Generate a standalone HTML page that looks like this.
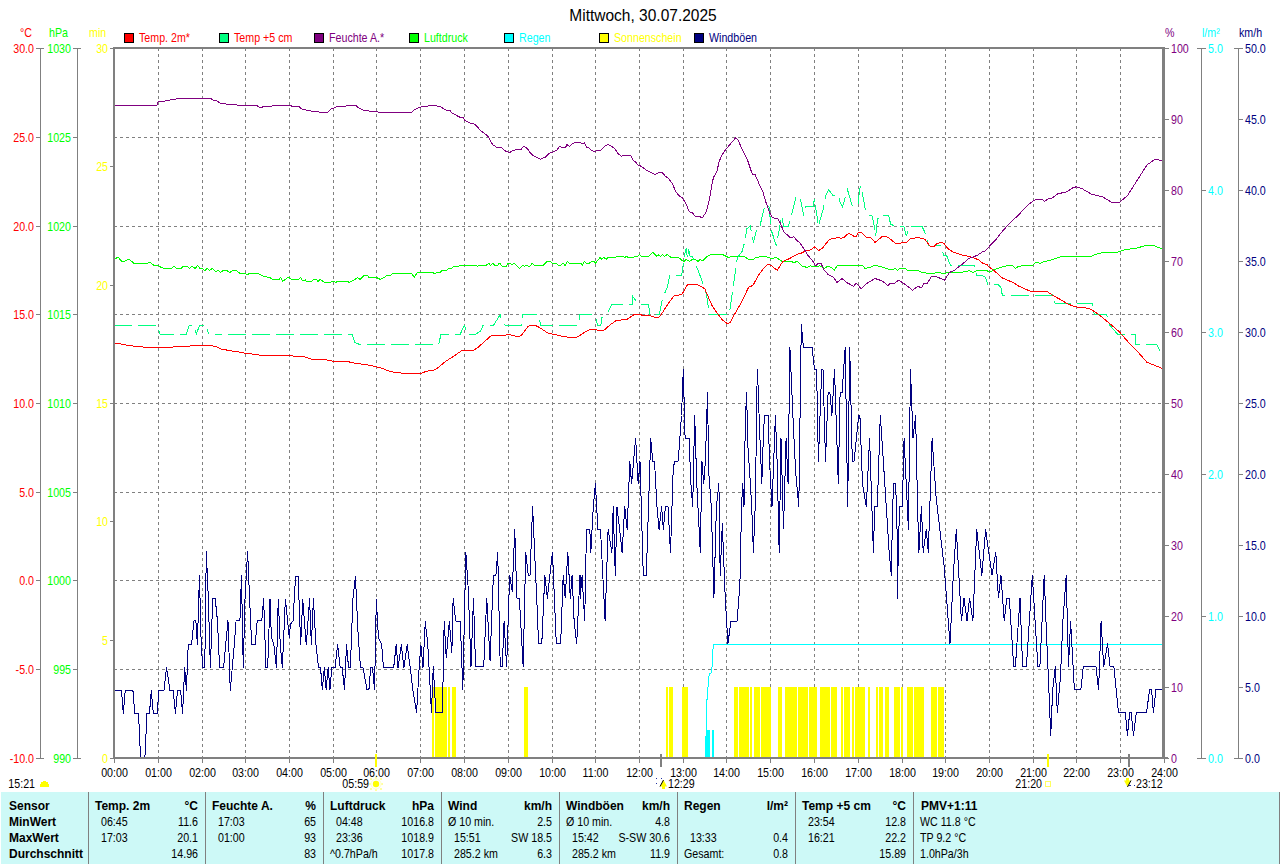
<!DOCTYPE html>
<html><head><meta charset="utf-8"><style>
html,body{margin:0;padding:0;background:#fff;width:1280px;height:864px;overflow:hidden}
svg{display:block;font-family:"Liberation Sans", sans-serif}
</style></head><body>
<svg width="1280" height="864" viewBox="0 0 1280 864">
<rect width="1280" height="864" fill="#fff"/>
<text transform="translate(643,21) scale(0.97,1)" fill="#000" text-anchor="middle" font-size="16" font-weight="normal" >Mittwoch, 30.07.2025</text>
<rect x="124.5" y="33.5" width="9" height="9" fill="#FF0000" stroke="#000" stroke-width="1"/>
<text transform="translate(139,42) scale(0.89,1)" fill="#FF0000" text-anchor="start" font-size="12" >Temp. 2m*</text>
<rect x="219.5" y="33.5" width="9" height="9" fill="#00FF80" stroke="#000" stroke-width="1"/>
<text transform="translate(234,42) scale(0.89,1)" fill="#FF0000" text-anchor="start" font-size="12" >Temp +5 cm</text>
<rect x="314.5" y="33.5" width="9" height="9" fill="#800080" stroke="#000" stroke-width="1"/>
<text transform="translate(329,42) scale(0.89,1)" fill="#800080" text-anchor="start" font-size="12" >Feuchte A.*</text>
<rect x="409.5" y="33.5" width="9" height="9" fill="#00FF00" stroke="#000" stroke-width="1"/>
<text transform="translate(424,42) scale(0.89,1)" fill="#00FF00" text-anchor="start" font-size="12" >Luftdruck</text>
<rect x="504.5" y="33.5" width="9" height="9" fill="#00FFFF" stroke="#000" stroke-width="1"/>
<text transform="translate(519,42) scale(0.89,1)" fill="#00FFFF" text-anchor="start" font-size="12" >Regen</text>
<rect x="599.5" y="33.5" width="9" height="9" fill="#FFFF00" stroke="#000" stroke-width="1"/>
<text transform="translate(614,42) scale(0.89,1)" fill="#FFFF00" text-anchor="start" font-size="12" >Sonnenschein</text>
<rect x="694.5" y="33.5" width="9" height="9" fill="#000080" stroke="#000" stroke-width="1"/>
<text transform="translate(709,42) scale(0.89,1)" fill="#000080" text-anchor="start" font-size="12" >Windböen</text>
<text transform="translate(20,37) scale(0.89,1)" fill="#FF0000" text-anchor="start" font-size="12" >°C</text>
<text transform="translate(49,37) scale(0.89,1)" fill="#00FF00" text-anchor="start" font-size="12" >hPa</text>
<text transform="translate(89,37) scale(0.89,1)" fill="#FFFF00" text-anchor="start" font-size="12" >min</text>
<text transform="translate(1165,37) scale(0.89,1)" fill="#800080" text-anchor="start" font-size="12" >%</text>
<text transform="translate(1202,37) scale(0.89,1)" fill="#00FFFF" text-anchor="start" font-size="12" >l/m²</text>
<text transform="translate(1239,37) scale(0.89,1)" fill="#000080" text-anchor="start" font-size="12" >km/h</text>
<line x1="158.5" y1="48" x2="158.5" y2="757" stroke="#808080" stroke-width="1" stroke-dasharray="3 3" shape-rendering="crispEdges"/>
<line x1="202.5" y1="48" x2="202.5" y2="757" stroke="#808080" stroke-width="1" stroke-dasharray="3 3" shape-rendering="crispEdges"/>
<line x1="245.5" y1="48" x2="245.5" y2="757" stroke="#808080" stroke-width="1" stroke-dasharray="3 3" shape-rendering="crispEdges"/>
<line x1="289.5" y1="48" x2="289.5" y2="757" stroke="#808080" stroke-width="1" stroke-dasharray="3 3" shape-rendering="crispEdges"/>
<line x1="333.5" y1="48" x2="333.5" y2="757" stroke="#808080" stroke-width="1" stroke-dasharray="3 3" shape-rendering="crispEdges"/>
<line x1="376.5" y1="48" x2="376.5" y2="757" stroke="#808080" stroke-width="1" stroke-dasharray="3 3" shape-rendering="crispEdges"/>
<line x1="420.5" y1="48" x2="420.5" y2="757" stroke="#808080" stroke-width="1" stroke-dasharray="3 3" shape-rendering="crispEdges"/>
<line x1="464.5" y1="48" x2="464.5" y2="757" stroke="#808080" stroke-width="1" stroke-dasharray="3 3" shape-rendering="crispEdges"/>
<line x1="508.5" y1="48" x2="508.5" y2="757" stroke="#808080" stroke-width="1" stroke-dasharray="3 3" shape-rendering="crispEdges"/>
<line x1="552.5" y1="48" x2="552.5" y2="757" stroke="#808080" stroke-width="1" stroke-dasharray="3 3" shape-rendering="crispEdges"/>
<line x1="595.5" y1="48" x2="595.5" y2="757" stroke="#808080" stroke-width="1" stroke-dasharray="3 3" shape-rendering="crispEdges"/>
<line x1="639.5" y1="48" x2="639.5" y2="757" stroke="#808080" stroke-width="1" stroke-dasharray="3 3" shape-rendering="crispEdges"/>
<line x1="683.5" y1="48" x2="683.5" y2="757" stroke="#808080" stroke-width="1" stroke-dasharray="3 3" shape-rendering="crispEdges"/>
<line x1="726.5" y1="48" x2="726.5" y2="757" stroke="#808080" stroke-width="1" stroke-dasharray="3 3" shape-rendering="crispEdges"/>
<line x1="770.5" y1="48" x2="770.5" y2="757" stroke="#808080" stroke-width="1" stroke-dasharray="3 3" shape-rendering="crispEdges"/>
<line x1="814.5" y1="48" x2="814.5" y2="757" stroke="#808080" stroke-width="1" stroke-dasharray="3 3" shape-rendering="crispEdges"/>
<line x1="858.5" y1="48" x2="858.5" y2="757" stroke="#808080" stroke-width="1" stroke-dasharray="3 3" shape-rendering="crispEdges"/>
<line x1="902.5" y1="48" x2="902.5" y2="757" stroke="#808080" stroke-width="1" stroke-dasharray="3 3" shape-rendering="crispEdges"/>
<line x1="945.5" y1="48" x2="945.5" y2="757" stroke="#808080" stroke-width="1" stroke-dasharray="3 3" shape-rendering="crispEdges"/>
<line x1="989.5" y1="48" x2="989.5" y2="757" stroke="#808080" stroke-width="1" stroke-dasharray="3 3" shape-rendering="crispEdges"/>
<line x1="1033.5" y1="48" x2="1033.5" y2="757" stroke="#808080" stroke-width="1" stroke-dasharray="3 3" shape-rendering="crispEdges"/>
<line x1="1076.5" y1="48" x2="1076.5" y2="757" stroke="#808080" stroke-width="1" stroke-dasharray="3 3" shape-rendering="crispEdges"/>
<line x1="1120.5" y1="48" x2="1120.5" y2="757" stroke="#808080" stroke-width="1" stroke-dasharray="3 3" shape-rendering="crispEdges"/>
<line x1="114" y1="137.5" x2="1162" y2="137.5" stroke="#808080" stroke-width="1" stroke-dasharray="3 3" shape-rendering="crispEdges"/>
<line x1="114" y1="226.5" x2="1162" y2="226.5" stroke="#808080" stroke-width="1" stroke-dasharray="3 3" shape-rendering="crispEdges"/>
<line x1="114" y1="314.5" x2="1162" y2="314.5" stroke="#808080" stroke-width="1" stroke-dasharray="3 3" shape-rendering="crispEdges"/>
<line x1="114" y1="403.5" x2="1162" y2="403.5" stroke="#808080" stroke-width="1" stroke-dasharray="3 3" shape-rendering="crispEdges"/>
<line x1="114" y1="492.5" x2="1162" y2="492.5" stroke="#808080" stroke-width="1" stroke-dasharray="3 3" shape-rendering="crispEdges"/>
<line x1="114" y1="580.5" x2="1162" y2="580.5" stroke="#808080" stroke-width="1" stroke-dasharray="3 3" shape-rendering="crispEdges"/>
<line x1="114" y1="669.5" x2="1162" y2="669.5" stroke="#808080" stroke-width="1" stroke-dasharray="3 3" shape-rendering="crispEdges"/>
<line x1="40.5" y1="48" x2="40.5" y2="759" stroke="#808080" stroke-width="1" />
<line x1="77.5" y1="48" x2="77.5" y2="759" stroke="#808080" stroke-width="1" />
<line x1="36" y1="48.5" x2="44" y2="48.5" stroke="#808080" stroke-width="1" />
<line x1="73" y1="48.5" x2="81" y2="48.5" stroke="#808080" stroke-width="1" />
<text transform="translate(34,53.0) scale(0.89,1)" fill="#FF0000" text-anchor="end" font-size="12" >30.0</text>
<text transform="translate(71,53.0) scale(0.89,1)" fill="#00FF00" text-anchor="end" font-size="12" >1030</text>
<line x1="36" y1="137.5" x2="41" y2="137.5" stroke="#808080" stroke-width="1" />
<line x1="73" y1="137.5" x2="78" y2="137.5" stroke="#808080" stroke-width="1" />
<text transform="translate(34,142.0) scale(0.89,1)" fill="#FF0000" text-anchor="end" font-size="12" >25.0</text>
<text transform="translate(71,142.0) scale(0.89,1)" fill="#00FF00" text-anchor="end" font-size="12" >1025</text>
<line x1="36" y1="226.5" x2="41" y2="226.5" stroke="#808080" stroke-width="1" />
<line x1="73" y1="226.5" x2="78" y2="226.5" stroke="#808080" stroke-width="1" />
<text transform="translate(34,231.0) scale(0.89,1)" fill="#FF0000" text-anchor="end" font-size="12" >20.0</text>
<text transform="translate(71,231.0) scale(0.89,1)" fill="#00FF00" text-anchor="end" font-size="12" >1020</text>
<line x1="36" y1="314.5" x2="41" y2="314.5" stroke="#808080" stroke-width="1" />
<line x1="73" y1="314.5" x2="78" y2="314.5" stroke="#808080" stroke-width="1" />
<text transform="translate(34,319.0) scale(0.89,1)" fill="#FF0000" text-anchor="end" font-size="12" >15.0</text>
<text transform="translate(71,319.0) scale(0.89,1)" fill="#00FF00" text-anchor="end" font-size="12" >1015</text>
<line x1="36" y1="403.5" x2="41" y2="403.5" stroke="#808080" stroke-width="1" />
<line x1="73" y1="403.5" x2="78" y2="403.5" stroke="#808080" stroke-width="1" />
<text transform="translate(34,408.0) scale(0.89,1)" fill="#FF0000" text-anchor="end" font-size="12" >10.0</text>
<text transform="translate(71,408.0) scale(0.89,1)" fill="#00FF00" text-anchor="end" font-size="12" >1010</text>
<line x1="36" y1="492.5" x2="41" y2="492.5" stroke="#808080" stroke-width="1" />
<line x1="73" y1="492.5" x2="78" y2="492.5" stroke="#808080" stroke-width="1" />
<text transform="translate(34,497.0) scale(0.89,1)" fill="#FF0000" text-anchor="end" font-size="12" >5.0</text>
<text transform="translate(71,497.0) scale(0.89,1)" fill="#00FF00" text-anchor="end" font-size="12" >1005</text>
<line x1="36" y1="580.5" x2="41" y2="580.5" stroke="#808080" stroke-width="1" />
<line x1="73" y1="580.5" x2="78" y2="580.5" stroke="#808080" stroke-width="1" />
<text transform="translate(34,585.0) scale(0.89,1)" fill="#FF0000" text-anchor="end" font-size="12" >0.0</text>
<text transform="translate(71,585.0) scale(0.89,1)" fill="#00FF00" text-anchor="end" font-size="12" >1000</text>
<line x1="36" y1="669.5" x2="41" y2="669.5" stroke="#808080" stroke-width="1" />
<line x1="73" y1="669.5" x2="78" y2="669.5" stroke="#808080" stroke-width="1" />
<text transform="translate(34,674.0) scale(0.89,1)" fill="#FF0000" text-anchor="end" font-size="12" >-5.0</text>
<text transform="translate(71,674.0) scale(0.89,1)" fill="#00FF00" text-anchor="end" font-size="12" >995</text>
<line x1="36" y1="758.5" x2="44" y2="758.5" stroke="#808080" stroke-width="1" />
<line x1="73" y1="758.5" x2="81" y2="758.5" stroke="#808080" stroke-width="1" />
<text transform="translate(34,763.0) scale(0.89,1)" fill="#FF0000" text-anchor="end" font-size="12" >-10.0</text>
<text transform="translate(71,763.0) scale(0.89,1)" fill="#00FF00" text-anchor="end" font-size="12" >990</text>
<line x1="110" y1="48.5" x2="114" y2="48.5" stroke="#808080" stroke-width="1" />
<text transform="translate(108,53.0) scale(0.89,1)" fill="#FFFF00" text-anchor="end" font-size="12" >30</text>
<line x1="110" y1="166.5" x2="114" y2="166.5" stroke="#808080" stroke-width="1" />
<text transform="translate(108,171.0) scale(0.89,1)" fill="#FFFF00" text-anchor="end" font-size="12" >25</text>
<line x1="110" y1="285.5" x2="114" y2="285.5" stroke="#808080" stroke-width="1" />
<text transform="translate(108,290.0) scale(0.89,1)" fill="#FFFF00" text-anchor="end" font-size="12" >20</text>
<line x1="110" y1="403.5" x2="114" y2="403.5" stroke="#808080" stroke-width="1" />
<text transform="translate(108,408.0) scale(0.89,1)" fill="#FFFF00" text-anchor="end" font-size="12" >15</text>
<line x1="110" y1="521.5" x2="114" y2="521.5" stroke="#808080" stroke-width="1" />
<text transform="translate(108,526.0) scale(0.89,1)" fill="#FFFF00" text-anchor="end" font-size="12" >10</text>
<line x1="110" y1="640.5" x2="114" y2="640.5" stroke="#808080" stroke-width="1" />
<text transform="translate(108,645.0) scale(0.89,1)" fill="#FFFF00" text-anchor="end" font-size="12" >5</text>
<line x1="110" y1="758.5" x2="114" y2="758.5" stroke="#808080" stroke-width="1" />
<text transform="translate(108,763.0) scale(0.89,1)" fill="#FFFF00" text-anchor="end" font-size="12" >0</text>
<line x1="1201.5" y1="48" x2="1201.5" y2="759" stroke="#808080" stroke-width="1" />
<line x1="1238.5" y1="48" x2="1238.5" y2="759" stroke="#808080" stroke-width="1" />
<line x1="1164" y1="48.5" x2="1169" y2="48.5" stroke="#808080" stroke-width="1" />
<text transform="translate(1171,53.0) scale(0.89,1)" fill="#800080" text-anchor="start" font-size="12" >100</text>
<line x1="1234" y1="48.5" x2="1243" y2="48.5" stroke="#808080" stroke-width="1" />
<text transform="translate(1245,53.0) scale(0.89,1)" fill="#000080" text-anchor="start" font-size="12" >50.0</text>
<line x1="1164" y1="119.5" x2="1169" y2="119.5" stroke="#808080" stroke-width="1" />
<text transform="translate(1171,124.0) scale(0.89,1)" fill="#800080" text-anchor="start" font-size="12" >90</text>
<line x1="1238" y1="119.5" x2="1243" y2="119.5" stroke="#808080" stroke-width="1" />
<text transform="translate(1245,124.0) scale(0.89,1)" fill="#000080" text-anchor="start" font-size="12" >45.0</text>
<line x1="1164" y1="190.5" x2="1169" y2="190.5" stroke="#808080" stroke-width="1" />
<text transform="translate(1171,195.0) scale(0.89,1)" fill="#800080" text-anchor="start" font-size="12" >80</text>
<line x1="1238" y1="190.5" x2="1243" y2="190.5" stroke="#808080" stroke-width="1" />
<text transform="translate(1245,195.0) scale(0.89,1)" fill="#000080" text-anchor="start" font-size="12" >40.0</text>
<line x1="1164" y1="261.5" x2="1169" y2="261.5" stroke="#808080" stroke-width="1" />
<text transform="translate(1171,266.0) scale(0.89,1)" fill="#800080" text-anchor="start" font-size="12" >70</text>
<line x1="1238" y1="261.5" x2="1243" y2="261.5" stroke="#808080" stroke-width="1" />
<text transform="translate(1245,266.0) scale(0.89,1)" fill="#000080" text-anchor="start" font-size="12" >35.0</text>
<line x1="1164" y1="332.5" x2="1169" y2="332.5" stroke="#808080" stroke-width="1" />
<text transform="translate(1171,337.0) scale(0.89,1)" fill="#800080" text-anchor="start" font-size="12" >60</text>
<line x1="1238" y1="332.5" x2="1243" y2="332.5" stroke="#808080" stroke-width="1" />
<text transform="translate(1245,337.0) scale(0.89,1)" fill="#000080" text-anchor="start" font-size="12" >30.0</text>
<line x1="1164" y1="403.5" x2="1169" y2="403.5" stroke="#808080" stroke-width="1" />
<text transform="translate(1171,408.0) scale(0.89,1)" fill="#800080" text-anchor="start" font-size="12" >50</text>
<line x1="1238" y1="403.5" x2="1243" y2="403.5" stroke="#808080" stroke-width="1" />
<text transform="translate(1245,408.0) scale(0.89,1)" fill="#000080" text-anchor="start" font-size="12" >25.0</text>
<line x1="1164" y1="474.5" x2="1169" y2="474.5" stroke="#808080" stroke-width="1" />
<text transform="translate(1171,479.0) scale(0.89,1)" fill="#800080" text-anchor="start" font-size="12" >40</text>
<line x1="1238" y1="474.5" x2="1243" y2="474.5" stroke="#808080" stroke-width="1" />
<text transform="translate(1245,479.0) scale(0.89,1)" fill="#000080" text-anchor="start" font-size="12" >20.0</text>
<line x1="1164" y1="545.5" x2="1169" y2="545.5" stroke="#808080" stroke-width="1" />
<text transform="translate(1171,550.0) scale(0.89,1)" fill="#800080" text-anchor="start" font-size="12" >30</text>
<line x1="1238" y1="545.5" x2="1243" y2="545.5" stroke="#808080" stroke-width="1" />
<text transform="translate(1245,550.0) scale(0.89,1)" fill="#000080" text-anchor="start" font-size="12" >15.0</text>
<line x1="1164" y1="616.5" x2="1169" y2="616.5" stroke="#808080" stroke-width="1" />
<text transform="translate(1171,621.0) scale(0.89,1)" fill="#800080" text-anchor="start" font-size="12" >20</text>
<line x1="1238" y1="616.5" x2="1243" y2="616.5" stroke="#808080" stroke-width="1" />
<text transform="translate(1245,621.0) scale(0.89,1)" fill="#000080" text-anchor="start" font-size="12" >10.0</text>
<line x1="1164" y1="687.5" x2="1169" y2="687.5" stroke="#808080" stroke-width="1" />
<text transform="translate(1171,692.0) scale(0.89,1)" fill="#800080" text-anchor="start" font-size="12" >10</text>
<line x1="1238" y1="687.5" x2="1243" y2="687.5" stroke="#808080" stroke-width="1" />
<text transform="translate(1245,692.0) scale(0.89,1)" fill="#000080" text-anchor="start" font-size="12" >5.0</text>
<line x1="1164" y1="758.5" x2="1169" y2="758.5" stroke="#808080" stroke-width="1" />
<text transform="translate(1171,763.0) scale(0.89,1)" fill="#800080" text-anchor="start" font-size="12" >0</text>
<line x1="1234" y1="758.5" x2="1243" y2="758.5" stroke="#808080" stroke-width="1" />
<text transform="translate(1245,763.0) scale(0.89,1)" fill="#000080" text-anchor="start" font-size="12" >0.0</text>
<line x1="1197" y1="48.5" x2="1206" y2="48.5" stroke="#808080" stroke-width="1" />
<text transform="translate(1208,53.0) scale(0.89,1)" fill="#00FFFF" text-anchor="start" font-size="12" >5.0</text>
<line x1="1201" y1="190.5" x2="1206" y2="190.5" stroke="#808080" stroke-width="1" />
<text transform="translate(1208,195.0) scale(0.89,1)" fill="#00FFFF" text-anchor="start" font-size="12" >4.0</text>
<line x1="1201" y1="332.5" x2="1206" y2="332.5" stroke="#808080" stroke-width="1" />
<text transform="translate(1208,337.0) scale(0.89,1)" fill="#00FFFF" text-anchor="start" font-size="12" >3.0</text>
<line x1="1201" y1="474.5" x2="1206" y2="474.5" stroke="#808080" stroke-width="1" />
<text transform="translate(1208,479.0) scale(0.89,1)" fill="#00FFFF" text-anchor="start" font-size="12" >2.0</text>
<line x1="1201" y1="616.5" x2="1206" y2="616.5" stroke="#808080" stroke-width="1" />
<text transform="translate(1208,621.0) scale(0.89,1)" fill="#00FFFF" text-anchor="start" font-size="12" >1.0</text>
<line x1="1197" y1="758.5" x2="1206" y2="758.5" stroke="#808080" stroke-width="1" />
<text transform="translate(1208,763.0) scale(0.89,1)" fill="#00FFFF" text-anchor="start" font-size="12" >0.0</text>
<defs><clipPath id="plotclip"><rect x="113" y="47" width="1050" height="712"/></clipPath></defs>
<g clip-path="url(#plotclip)">
<g fill="#FFFF00" shape-rendering="crispEdges"><rect x="432" y="687" width="2" height="70"/><rect x="435" y="687" width="12" height="70"/><rect x="448" y="687" width="2" height="70"/><rect x="452" y="687" width="4" height="70"/><rect x="524" y="687" width="4" height="70"/><rect x="666" y="687" width="2" height="70"/><rect x="669" y="687" width="4" height="70"/><rect x="682" y="687" width="6" height="70"/><rect x="734" y="687" width="4" height="70"/><rect x="739" y="687" width="10" height="70"/><rect x="750" y="687" width="2" height="70"/><rect x="754" y="687" width="6" height="70"/><rect x="761" y="687" width="10" height="70"/><rect x="778" y="687" width="4" height="70"/><rect x="785" y="687" width="12" height="70"/><rect x="798" y="687" width="10" height="70"/><rect x="809" y="687" width="8" height="70"/><rect x="820" y="687" width="10" height="70"/><rect x="831" y="687" width="6" height="70"/><rect x="841" y="687" width="2" height="70"/><rect x="844" y="687" width="6" height="70"/><rect x="852" y="687" width="2" height="70"/><rect x="855" y="687" width="10" height="70"/><rect x="868" y="687" width="2" height="70"/><rect x="876" y="687" width="2" height="70"/><rect x="879" y="687" width="4" height="70"/><rect x="885" y="687" width="4" height="70"/><rect x="894" y="687" width="6" height="70"/><rect x="901" y="687" width="2" height="70"/><rect x="907" y="687" width="6" height="70"/><rect x="914" y="687" width="10" height="70"/><rect x="931" y="687" width="6" height="70"/><rect x="938" y="687" width="6" height="70"/></g>
<g fill="#00FFFF" shape-rendering="crispEdges"><rect x="705" y="744" width="1" height="13"/><rect x="706" y="730" width="4" height="27"/><rect x="712" y="730" width="2" height="27"/></g>
<polyline points="705.50,757.00 706.90,700.70 707.60,693.90 708.40,680.40 709.40,673.60 710.90,673.60 712.10,666.10 712.60,652.60 713.60,644.50 1162.00,644.50" fill="none" stroke="#00FFFF" stroke-width="1" stroke-linejoin="round" shape-rendering="crispEdges" />
<polyline points="113.82,690.32 121.46,690.32 123.25,713.25 125.29,690.32 132.93,690.32 134.71,713.25 138.54,713.25 140.57,757.83 144.90,757.83 146.94,713.25 149.49,713.25 151.27,690.32 153.31,713.25 157.13,713.25 158.92,690.32 164.01,690.32 166.56,667.39 169.87,690.32 173.18,690.32 175.48,713.25 177.52,690.32 180.57,690.32 182.61,713.25 184.65,667.39 186.43,690.32 188.22,644.46 191.53,644.46 194.08,620.25 195.86,620.25 197.39,644.46 199.43,575.67 201.21,644.46 202.74,667.39 204.78,667.39 206.31,551.46 208.34,598.60 210.38,667.39 212.68,598.60 215.22,598.60 217.52,621.53 219.55,667.39 223.63,667.39 227.96,620.25 230.25,690.32 234.33,644.46 236.11,620.25 239.94,620.25 241.46,575.67 243.25,667.39 245.03,598.60 247.58,551.46 249.62,598.60 251.66,644.46 255.22,644.46 257.26,620.25 261.85,620.25 263.63,598.60 265.92,667.39 267.71,667.39 270.00,598.60 271.37,637.20 273.92,644.84 276.46,667.77 278.25,598.98 280.29,644.84 282.32,667.77 285.38,598.98 289.20,637.20 290.48,624.46 293.03,620.64 295.57,576.05 298.12,576.05 300.67,644.84 302.71,598.98 306.27,644.84 309.59,598.98 311.37,644.84 313.41,598.98 315.96,644.84 318.50,667.77 320.54,667.77 322.32,689.43 324.36,667.77 326.15,689.43 328.18,667.77 329.97,689.43 331.75,667.77 335.06,667.77 337.61,644.84 340.16,667.77 342.20,667.77 344.49,689.43 346.53,644.84 348.57,667.77 350.35,667.77 352.90,598.98 355.45,576.05 357.99,632.10 360.54,667.77 363.09,667.77 366.91,689.43 368.95,689.43 370.73,667.77 372.52,667.77 374.55,689.43 376.34,598.98 378.38,637.20 381.69,644.84 383.47,667.77 393.66,667.77 396.21,644.84 397.99,667.77 401.31,644.84 403.85,667.77 407.17,644.84 410.22,667.77 412.77,689.43 416.59,712.36 419.14,667.77 420.92,644.84 422.96,667.77 425.00,627.01 425.10,621.02 427.64,642.68 429.68,678.34 431.46,712.23 433.25,666.88 435.80,712.23 442.42,712.23 444.20,621.02 446.24,657.96 449.30,621.02 451.85,652.87 453.12,598.09 455.67,621.02 460.25,621.02 462.80,689.30 465.86,552.23 468.41,591.72 470.96,666.88 473.50,598.09 475.54,666.88 483.69,666.88 486.75,598.09 490.06,660.51 493.38,575.16 495.92,575.16 497.71,552.23 500.25,666.88 502.29,666.88 504.08,621.02 506.62,666.88 509.68,575.16 512.23,591.72 514.78,529.55 516.82,598.09 519.36,598.09 523.18,666.88 525.73,552.23 528.28,575.16 530.06,575.16 532.61,506.62 534.65,552.23 537.71,621.02 538.47,643.95 541.78,643.95 544.84,575.16 547.39,598.09 552.48,552.23 556.31,643.69 560.64,643.69 563.18,575.16 565.22,598.09 567.77,552.23 570.32,598.09 572.10,575.16 574.14,621.02 576.69,643.95 580.00,575.16 580.10,598.60 582.10,575.70 584.70,621.00 586.50,529.40 589.80,529.40 590.80,552.70 593.30,506.70 595.40,483.80 597.90,529.40 600.50,529.40 605.10,621.00 608.10,529.40 611.90,552.50 613.20,506.70 615.30,575.70 617.00,506.70 619.60,529.40 622.10,552.50 624.70,506.70 627.20,529.40 629.80,461.10 631.60,483.80 635.60,438.20 638.20,483.80 640.00,461.10 643.30,575.40 646.30,575.40 650.70,438.20 652.70,461.10 654.50,461.10 657.00,506.70 659.10,529.40 661.60,506.70 663.40,529.40 665.40,506.70 668.00,506.70 670.50,552.50 673.10,472.90 674.40,461.10 678.20,461.10 681.50,415.50 683.30,369.90 685.10,438.20 689.10,438.20 690.90,483.80 692.70,506.70 694.70,415.50 696.80,483.80 700.30,552.50 701.90,461.10 703.70,483.80 705.40,461.10 707.50,392.60 708.80,472.90 711.30,506.70 713.90,598.00 716.40,506.70 718.90,483.80 720.20,575.40 722.30,523.80 725.30,598.60 727.90,644.00 730.90,621.00 735.00,621.00 737.10,621.00 738.90,598.10 740.20,575.70 741.50,506.80 742.70,483.80 744.00,506.80 745.30,421.90 746.60,392.60 747.80,444.80 750.40,483.80 751.70,506.80 753.40,552.50 755.50,498.30 756.80,392.60 757.50,369.90 759.30,421.90 761.80,483.80 763.10,444.80 764.40,415.50 768.20,415.50 769.50,461.10 772.00,506.80 775.40,415.50 777.10,461.10 779.20,552.50 781.00,438.20 783.50,528.90 786.10,438.20 788.10,483.80 789.90,347.00 793.20,421.90 795.70,472.90 798.80,506.80 801.30,324.30 803.40,347.00 812.00,347.00 814.60,369.90 816.60,369.90 818.40,461.10 821.70,369.90 823.00,369.90 825.50,461.10 828.10,392.60 829.90,392.60 831.90,415.50 834.50,369.90 838.30,483.80 840.10,392.60 842.10,392.60 845.20,347.00 847.70,506.80 849.70,347.00 852.30,461.10 854.10,461.10 858.70,415.50 859.90,415.50 862.50,483.80 866.30,506.80 869.60,438.20 873.40,552.50 874.70,506.80 877.30,506.80 880.30,415.50 884.10,472.90 889.20,552.50 891.40,575.70 892.60,506.70 893.90,483.80 895.70,483.80 897.00,529.40 897.20,598.60 899.50,506.70 902.30,506.70 904.10,438.20 908.40,529.40 910.50,369.90 913.00,438.20 915.60,415.50 917.60,506.70 918.90,552.50 921.40,506.70 923.20,552.50 926.30,529.40 928.30,552.50 932.10,438.20 936.00,495.80 941.00,540.00 944.10,565.50 950.00,644.00 953.30,575.40 956.30,529.40 961.40,621.00 964.00,598.00 967.00,621.00 969.60,598.00 972.90,621.00 976.70,529.40 981.80,575.40 985.60,529.40 992.00,575.40 995.80,552.50 998.40,598.00 1001.00,575.40 1004.20,621.00 1006.80,598.00 1009.30,598.00 1013.70,666.60 1015.40,666.60 1020.00,598.00 1022.60,666.60 1026.40,666.60 1032.30,575.40 1037.90,666.60 1039.90,666.60 1044.20,575.40 1046.40,631.70 1048.90,689.80 1050.70,735.70 1052.70,689.80 1055.30,666.60 1057.30,712.70 1060.40,677.60 1062.90,621.00 1066.20,575.40 1068.50,666.60 1070.60,621.00 1074.40,689.80 1080.80,689.80 1083.30,666.60 1096.00,666.60 1098.60,689.80 1101.10,621.00 1103.70,666.60 1107.50,644.00 1110.10,666.60 1113.90,666.60 1118.50,712.70 1125.40,712.70 1127.40,735.70 1129.70,712.70 1131.20,712.70 1133.50,735.70 1136.30,712.70 1146.50,712.70 1149.60,689.80 1151.60,689.80 1153.40,712.70 1155.90,689.80 1162.00,689.80" fill="none" stroke="#000080" stroke-width="1" stroke-linejoin="round" shape-rendering="crispEdges" />
<polyline points="114.00,259.50 118.10,257.00 121.30,261.00 125.40,261.00 128.60,259.10 134.30,263.50 147.30,263.50 150.00,262.00 151.30,263.50 153.80,265.10 158.60,265.60 161.90,267.90 165.10,268.40 171.60,268.40 174.00,266.30 176.50,268.40 181.30,268.40 183.70,266.00 187.00,266.30 189.40,268.40 191.80,266.30 195.10,268.40 197.50,265.60 200.00,268.40 202.40,268.40 204.80,270.50 207.25,268.40 209.70,270.50 212.10,268.40 215.40,271.60 218.60,270.50 220.20,272.40 223.45,270.50 226.70,270.50 229.90,272.40 233.20,270.50 236.40,270.50 239.70,273.20 244.50,273.20 247.00,274.80 250.20,273.20 257.50,273.20 264.00,276.50 269.50,277.40 272.50,279.40 279.30,279.40 280.50,277.40 282.80,281.30 288.30,277.10 291.40,279.40 298.90,279.40 300.70,277.40 302.60,280.90 305.40,279.70 306.40,281.30 311.70,281.30 314.00,279.40 316.20,279.40 318.00,281.30 320.40,279.40 324.50,282.40 329.75,282.40 334.30,281.30 335.80,282.40 337.30,281.30 347.10,281.30 349.30,282.40 353.90,280.10 357.60,277.40 359.90,279.40 364.40,275.30 367.40,275.60 368.90,277.40 376.40,277.40 380.20,279.40 384.00,277.40 387.00,275.60 390.75,275.30 393.00,273.30 411.80,273.30 414.10,277.40 417.10,272.90 420.00,272.40 432.20,272.40 434.60,273.50 438.60,272.40 440.00,272.50 442.50,270.25 446.25,270.25 448.75,268.75 451.25,268.50 453.75,266.25 458.75,266.25 460.00,265.40 476.25,265.40 477.50,266.50 478.75,265.40 486.25,265.40 488.75,263.10 490.60,265.60 492.50,263.10 495.00,265.40 497.50,265.40 499.40,263.10 502.50,266.25 506.25,266.25 508.10,263.50 510.00,263.10 511.90,265.00 514.40,263.10 519.40,268.50 522.50,265.40 525.00,266.25 526.25,265.40 529.40,266.50 532.50,263.10 534.40,265.40 543.10,265.40 547.50,261.25 550.00,261.50 552.50,263.10 556.25,263.10 558.75,265.60 560.60,265.40 563.10,263.10 565.00,265.40 567.50,261.25 569.40,263.10 580.60,263.10 582.50,265.40 584.40,261.25 586.25,263.10 589.40,263.10 591.90,261.25 593.75,261.50 595.60,263.10 600.00,257.50 601.90,259.40 603.75,257.50 606.25,259.40 608.10,257.50 615.60,257.50 616.90,256.25 623.10,256.25 625.00,257.50 626.25,256.25 628.10,257.50 633.10,257.50 635.00,256.25 637.50,256.25 639.40,254.75 641.25,256.25 648.75,256.25 652.50,252.25 656.90,256.25 658.75,254.75 660.60,256.25 662.50,254.75 664.40,256.25 667.50,254.40 670.60,257.25 674.40,257.50 679.40,258.10 683.75,261.90 686.25,259.40 689.40,261.25 692.50,259.40 695.00,259.40 698.10,261.50 700.00,259.40 702.40,261.00 707.30,256.20 711.30,254.60 722.70,254.60 728.40,257.50 732.40,256.20 743.80,256.20 748.60,259.40 753.50,259.40 755.90,257.50 764.80,256.20 771.30,258.60 776.20,257.50 782.70,261.80 787.50,261.80 790.80,261.00 794.00,263.00 797.20,261.00 802.10,265.90 807.00,267.50 810.20,265.90 813.50,266.70 819.90,265.90 824.80,268.30 828.00,265.90 831.30,267.50 834.50,270.00 837.00,265.90 841.00,265.10 845.90,265.90 860.00,265.10 862.50,265.25 865.00,268.50 870.00,267.25 875.00,265.25 882.50,267.25 891.25,270.00 895.00,268.50 897.50,270.25 900.00,268.50 905.00,268.50 907.50,270.25 917.50,270.25 922.50,272.75 930.00,273.30 938.30,272.80 943.90,273.30 949.40,272.40 956.40,272.80 966.10,271.70 968.90,270.60 973.00,272.40 976.50,270.60 987.00,270.60 989.70,272.40 993.90,269.60 1000.80,267.50 1005.00,266.10 1012.00,265.40 1015.40,268.20 1018.90,266.10 1032.80,265.40 1035.60,262.00 1040.40,263.30 1043.90,261.70 1051.10,260.00 1060.80,256.70 1090.00,256.70 1096.90,253.90 1103.90,252.50 1116.40,252.50 1124.70,249.70 1135.80,248.30 1145.60,245.60 1153.90,245.60 1162.00,248.90" fill="none" stroke="#00FF00" stroke-width="1" stroke-linejoin="round" shape-rendering="crispEdges" />
<g fill="none" stroke="#00FF80" stroke-width="1" shape-rendering="crispEdges"><polyline points="114.00,325.00 132.00,325.00"/><polyline points="138.00,325.00 156.00,325.00"/><polyline points="158.67,330.00 160.00,334.00 174.00,334.00"/><polyline points="180.00,334.00 186.25,334.00 189.40,325.00 192.15,325.00"/><polyline points="194.92,329.65 196.25,334.00 199.75,325.00 204.40,325.00"/><polyline points="207.34,329.40 208.75,334.00 222.15,334.03"/><polyline points="228.15,334.04 246.15,334.08"/><polyline points="252.15,334.09 270.15,334.13"/><polyline points="276.15,334.14 294.15,334.18"/><polyline points="300.15,334.19 318.15,334.23"/><polyline points="324.15,334.24 342.15,334.28"/><polyline points="348.15,334.29 352.30,334.30 354.60,342.20 359.90,344.60 360.55,344.60"/><polyline points="366.55,344.59 384.55,344.57"/><polyline points="390.55,344.56 408.55,344.54"/><polyline points="414.55,344.53 432.55,344.51"/><polyline points="438.55,344.50 438.60,344.50 441.10,334.00 448.55,334.00"/><polyline points="454.55,334.00 460.50,334.00 462.50,328.30 464.60,326.00 465.81,330.05"/><polyline points="469.05,334.00 475.90,334.00 480.80,330.80 483.20,325.10 483.75,325.10"/><polyline points="489.75,325.10 493.70,325.10 500.20,314.60 501.09,318.15"/><polyline points="504.34,324.15 505.10,325.10 521.30,325.10 521.43,324.25"/><polyline points="522.34,318.25 522.90,314.60 537.25,314.60"/><polyline points="539.46,319.55 540.75,325.10 553.20,325.10"/><polyline points="559.20,325.10 577.20,325.10"/><polyline points="579.01,320.10 579.90,314.60 592.40,314.60"/><polyline points="596.10,319.40 597.70,325.10 600.90,325.10 601.70,317.80 603.50,316.62"/><polyline points="608.05,311.70 611.50,304.80 622.60,304.80"/><polyline points="628.60,304.80 632.50,304.80 632.50,295.90 635.80,300.80 636.04,301.10"/><polyline points="641.30,304.80 648.70,304.80 649.60,314.60 650.40,314.60"/><polyline points="656.40,314.60 659.30,314.60 662.26,299.50"/><polyline points="664.58,293.50 667.40,287.00 669.80,275.70 670.00,275.70"/><polyline points="676.00,275.65 681.25,275.60 682.50,271.90 683.36,262.85"/><polyline points="684.20,256.85 686.25,248.10 687.34,257.35"/><polyline points="688.11,254.15 688.75,249.40 690.00,256.25 692.50,256.20 693.78,260.10"/><polyline points="696.23,266.10 697.40,268.40 703.00,283.80 703.10,284.10"/><polyline points="705.14,290.10 706.30,293.50 708.51,308.10"/><polyline points="709.42,314.10 709.50,314.60 722.50,314.60 724.00,314.20 727.00,314.20"/><polyline points="729.75,310.40 732.33,292.40"/><polyline points="733.19,286.40 735.78,268.40"/><polyline points="736.64,262.40 737.30,257.80 742.10,251.30 743.80,245.60 744.03,244.40"/><polyline points="745.16,238.40 747.00,228.60 750.20,226.20 751.22,231.20"/><polyline points="752.44,237.20 753.50,242.40 756.66,229.60"/><polyline points="760.02,226.10 761.60,218.90 764.26,208.10"/><polyline points="768.60,205.90 768.90,205.90 770.65,223.60"/><polyline points="771.24,229.60 771.30,230.20 776.20,245.60 776.58,243.60"/><polyline points="777.71,237.60 779.40,228.60 781.07,219.60"/><polyline points="782.14,217.80 783.50,226.20 788.30,226.20 789.65,221.40"/><polyline points="791.31,215.40 793.20,208.40 795.91,197.40"/><polyline points="800.40,199.30 800.50,199.40 803.70,215.70 803.98,214.10"/><polyline points="805.05,208.10 805.30,206.70 813.50,206.70 814.30,198.60 814.34,198.90"/><polyline points="815.20,204.90 817.50,218.90 817.94,222.90"/><polyline points="819.08,223.50 823.20,209.20 823.84,205.50"/><polyline points="824.89,199.50 825.60,195.40 828.80,189.70 832.90,195.40 835.40,195.40"/><polyline points="839.21,198.20 840.20,202.70 842.60,206.70 845.34,197.20"/><polyline points="847.07,191.20 847.50,189.70 852.26,206.20"/><polyline points="857.90,204.34 858.00,204.30 859.60,189.70 860.56,186.40"/><polyline points="862.08,192.10 862.50,193.75 865.40,210.10"/><polyline points="868.95,215.25 871.90,215.25 875.00,229.40 875.08,230.30"/><polyline points="875.61,236.20 877.50,219.40 878.22,218.20"/><polyline points="883.05,215.25 888.75,215.25 890.60,224.40 893.75,225.43"/><polyline points="899.75,226.25 903.75,226.25 906.25,235.60 908.11,230.95"/><polyline points="911.30,226.25 921.90,226.25 924.40,231.25 925.13,233.65"/><polyline points="926.95,239.65 928.75,245.60 931.25,246.25 940.40,245.30 940.53,245.70"/><polyline points="942.55,251.70 943.90,255.70 946.70,255.70 949.40,262.60 950.80,265.40 952.30,265.40"/><polyline points="958.30,265.40 974.40,265.40 974.81,267.30"/><polyline points="976.11,273.30 976.50,275.10 980.70,275.10 985.60,277.20 987.60,284.20 987.70,284.20"/><polyline points="993.70,284.20 998.00,284.20 1001.50,288.30 1002.20,295.30 1004.80,295.28"/><polyline points="1010.80,295.25 1028.80,295.14"/><polyline points="1034.80,295.11 1052.50,295.00 1052.59,295.30"/><polyline points="1054.48,301.30 1055.30,303.90 1070.70,303.90"/><polyline points="1076.70,303.90 1092.80,303.90 1093.05,305.80"/><polyline points="1093.85,311.80 1094.20,314.40 1106.70,314.40 1107.46,317.30"/><polyline points="1109.03,323.30 1109.40,324.70 1117.80,334.40 1124.70,334.40"/><polyline points="1130.70,334.40 1135.00,334.40 1135.80,344.20 1139.70,344.20"/><polyline points="1145.70,344.20 1156.70,344.20 1160.16,351.20"/></g>
<polyline points="114.00,343.40 118.10,343.40 123.00,344.50 129.40,345.70 139.20,346.60 147.30,347.50 171.60,347.50 174.80,346.60 189.40,346.20 191.00,345.40 210.50,345.40 217.00,347.00 220.20,348.90 223.45,349.40 231.60,351.00 238.00,351.80 244.50,353.10 251.00,353.80 259.10,355.10 270.00,355.40 292.10,355.40 293.60,356.20 303.40,356.60 311.70,359.20 325.20,359.60 333.50,361.40 347.10,361.40 354.60,363.25 362.90,364.20 373.40,366.00 381.70,368.20 389.20,371.20 394.50,372.30 405.00,373.50 420.00,373.70 426.50,371.30 435.40,369.70 445.90,361.20 452.40,357.00 462.10,350.50 473.50,350.20 477.50,347.80 485.60,340.50 491.30,335.60 504.30,335.60 507.50,334.30 513.20,335.60 517.25,336.75 521.30,335.60 527.80,326.70 531.00,325.10 535.90,325.60 540.75,328.30 548.00,333.20 556.10,334.80 562.60,336.40 569.10,337.25 575.00,337.25 578.20,336.75 585.50,331.60 591.20,329.10 596.90,330.00 604.20,330.00 609.80,325.10 615.50,321.00 619.60,320.20 626.90,319.40 634.20,314.60 638.20,314.20 643.10,315.40 649.60,315.40 654.40,317.00 659.30,317.00 661.70,313.75 667.40,304.80 673.90,296.00 682.00,294.30 687.60,284.60 690.90,284.10 697.40,284.60 704.70,288.60 712.00,305.60 717.60,313.75 722.50,320.20 727.35,323.50 730.00,322.60 735.60,312.40 741.10,303.10 748.50,287.40 753.10,285.20 757.80,276.30 763.30,268.90 768.00,264.30 770.70,265.20 777.20,270.40 782.80,261.50 789.30,258.70 797.60,254.10 800.00,253.75 806.25,250.60 811.25,249.75 814.40,246.90 818.75,250.60 822.50,248.10 829.40,239.40 833.75,238.50 838.10,237.50 841.25,238.50 844.40,237.10 848.75,233.10 853.75,236.25 856.25,236.25 858.10,232.50 861.25,232.25 866.25,237.25 870.60,237.25 875.00,242.50 882.50,236.25 888.10,237.25 895.60,243.50 906.25,242.50 910.60,238.50 918.75,237.50 925.00,239.40 930.00,246.25 934.40,246.25 936.90,243.50 941.25,242.50 943.75,243.10 948.00,248.75 952.20,251.50 956.40,253.30 962.00,255.00 968.90,256.40 973.00,257.50 978.60,259.90 982.80,263.30 987.00,264.70 989.70,267.50 995.30,271.70 1002.20,277.90 1007.00,280.00 1013.30,282.50 1018.90,286.25 1030.00,291.10 1046.90,291.40 1053.90,296.10 1060.80,299.70 1067.80,303.90 1074.70,306.70 1085.80,308.00 1091.40,309.40 1101.10,316.40 1109.40,323.30 1119.20,331.70 1128.90,342.80 1137.20,351.10 1146.90,362.20 1162.00,368.30" fill="none" stroke="#FF0000" stroke-width="1" stroke-linejoin="round" shape-rendering="crispEdges" />
<polyline points="114.00,105.00 157.00,105.00 158.00,102.00 161.00,101.00 164.00,102.00 166.00,100.00 170.00,100.00 172.00,99.00 176.00,99.00 177.00,98.00 210.00,98.00 213.00,100.00 217.00,101.00 220.00,103.00 225.00,103.00 226.00,104.00 236.00,104.00 237.00,105.00 256.00,105.00 259.00,107.00 261.00,108.00 264.00,106.00 272.00,106.00 273.00,105.00 290.00,105.00 293.00,107.00 296.00,106.00 298.00,106.00 302.00,109.00 306.00,110.00 311.00,111.00 318.00,111.00 319.00,112.00 328.00,112.00 331.00,109.00 334.00,108.00 338.00,106.00 346.00,106.00 347.00,105.00 355.00,105.00 359.00,108.00 363.00,110.00 368.00,110.00 369.00,111.00 377.00,111.00 378.00,112.00 412.00,112.00 415.00,109.40 419.40,107.50 422.50,106.50 427.50,106.25 428.75,105.40 436.00,105.40 438.75,107.00 440.00,106.50 442.50,108.00 446.00,110.00 450.00,110.60 452.00,113.00 457.50,116.00 460.00,117.25 463.00,117.50 465.00,120.60 470.00,123.00 475.00,124.40 477.50,127.00 481.00,131.00 487.50,135.60 490.00,140.00 492.50,144.40 497.50,148.00 499.40,147.50 502.00,147.75 503.75,150.00 506.00,151.25 510.00,152.50 512.50,150.60 515.60,149.75 521.00,149.40 523.75,146.25 527.50,148.75 530.00,152.50 533.00,155.60 536.00,156.90 540.60,159.40 543.75,157.50 545.60,157.00 548.75,153.50 553.00,151.90 557.00,150.00 559.40,146.25 562.00,147.25 565.60,147.25 567.00,144.40 569.40,146.50 572.50,143.50 575.60,142.50 580.60,142.50 582.50,144.00 584.40,142.50 586.25,146.90 588.75,148.00 591.90,150.60 595.00,151.90 597.50,150.25 601.25,150.00 604.40,146.25 608.00,144.40 611.25,146.25 615.00,148.75 617.50,153.00 621.25,156.25 623.75,155.25 630.60,155.60 633.00,160.00 636.25,162.50 638.00,165.25 641.25,166.25 646.25,170.25 655.00,174.40 659.40,172.25 662.50,172.75 665.60,176.50 668.00,178.00 672.50,183.75 675.60,191.25 678.75,195.60 682.50,198.00 685.60,203.00 689.40,211.90 692.50,212.75 695.00,216.25 697.50,216.25 702.50,217.50 706.25,211.90 707.50,207.50 710.00,196.25 712.50,181.25 713.75,176.90 716.90,171.90 718.75,163.00 721.25,156.25 726.25,148.75 731.25,143.00 735.60,138.00 738.00,140.00 742.50,150.00 747.50,160.00 751.25,171.25 753.00,175.00 755.00,174.40 757.50,180.00 760.00,186.25 763.00,192.00 765.60,201.25 769.40,212.50 772.50,217.50 776.25,218.75 777.50,218.50 780.00,222.50 783.75,231.90 787.50,235.00 790.60,238.00 793.75,236.50 796.90,240.60 800.00,243.00 804.40,249.40 807.50,255.00 812.50,260.60 815.60,265.60 818.00,263.75 821.25,263.75 823.75,269.40 828.00,274.40 833.75,277.50 836.90,282.50 842.00,278.50 847.50,283.00 853.75,286.25 856.25,283.00 861.25,288.75 866.25,283.75 875.00,278.50 881.25,280.60 885.00,283.00 888.00,285.60 890.60,283.00 895.00,283.00 898.75,280.00 907.50,286.25 912.50,290.25 918.00,286.25 921.25,288.00 924.40,283.00 927.00,283.75 931.25,276.90 936.25,276.50 944.60,280.30 949.40,272.40 955.00,270.30 957.80,267.50 963.30,263.30 968.90,258.50 973.00,257.00 977.90,255.00 982.80,251.50 985.60,250.80 989.70,246.00 995.30,240.40 999.40,234.90 1007.80,225.10 1013.30,219.60 1016.80,216.80 1027.20,205.70 1034.20,200.10 1037.00,199.40 1042.50,199.40 1044.60,201.50 1047.40,199.20 1052.20,198.00 1057.80,193.90 1060.60,193.20 1066.80,191.80 1072.40,188.00 1076.50,186.70 1082.00,188.60 1091.40,194.20 1102.50,196.90 1112.20,202.50 1119.20,202.50 1127.50,195.60 1137.20,180.30 1146.90,165.00 1153.90,160.00 1156.70,159.40 1162.00,160.80" fill="none" stroke="#800080" stroke-width="1" stroke-linejoin="round" shape-rendering="crispEdges" />
</g>
<rect x="113" y="47" width="1051" height="2" fill="#808080" />
<rect x="113" y="47" width="2" height="712" fill="#808080" />
<rect x="1162" y="47" width="3" height="712" fill="#808080" />
<rect x="113" y="757" width="1055" height="2" fill="#808080" />
<line x1="114.5" y1="758" x2="114.5" y2="763" stroke="#808080" stroke-width="1" />
<text transform="translate(114.5,777) scale(0.89,1)" fill="#000" text-anchor="middle" font-size="12" >00:00</text>
<line x1="158.5" y1="758" x2="158.5" y2="763" stroke="#808080" stroke-width="1" />
<text transform="translate(158.5,777) scale(0.89,1)" fill="#000" text-anchor="middle" font-size="12" >01:00</text>
<line x1="202.5" y1="758" x2="202.5" y2="763" stroke="#808080" stroke-width="1" />
<text transform="translate(202.5,777) scale(0.89,1)" fill="#000" text-anchor="middle" font-size="12" >02:00</text>
<line x1="245.5" y1="758" x2="245.5" y2="763" stroke="#808080" stroke-width="1" />
<text transform="translate(245.5,777) scale(0.89,1)" fill="#000" text-anchor="middle" font-size="12" >03:00</text>
<line x1="289.5" y1="758" x2="289.5" y2="763" stroke="#808080" stroke-width="1" />
<text transform="translate(289.5,777) scale(0.89,1)" fill="#000" text-anchor="middle" font-size="12" >04:00</text>
<line x1="333.5" y1="758" x2="333.5" y2="763" stroke="#808080" stroke-width="1" />
<text transform="translate(333.5,777) scale(0.89,1)" fill="#000" text-anchor="middle" font-size="12" >05:00</text>
<line x1="376.5" y1="758" x2="376.5" y2="763" stroke="#808080" stroke-width="1" />
<text transform="translate(376.5,777) scale(0.89,1)" fill="#000" text-anchor="middle" font-size="12" >06:00</text>
<line x1="420.5" y1="758" x2="420.5" y2="763" stroke="#808080" stroke-width="1" />
<text transform="translate(420.5,777) scale(0.89,1)" fill="#000" text-anchor="middle" font-size="12" >07:00</text>
<line x1="464.5" y1="758" x2="464.5" y2="763" stroke="#808080" stroke-width="1" />
<text transform="translate(464.5,777) scale(0.89,1)" fill="#000" text-anchor="middle" font-size="12" >08:00</text>
<line x1="508.5" y1="758" x2="508.5" y2="763" stroke="#808080" stroke-width="1" />
<text transform="translate(508.5,777) scale(0.89,1)" fill="#000" text-anchor="middle" font-size="12" >09:00</text>
<line x1="552.5" y1="758" x2="552.5" y2="763" stroke="#808080" stroke-width="1" />
<text transform="translate(552.5,777) scale(0.89,1)" fill="#000" text-anchor="middle" font-size="12" >10:00</text>
<line x1="595.5" y1="758" x2="595.5" y2="763" stroke="#808080" stroke-width="1" />
<text transform="translate(595.5,777) scale(0.89,1)" fill="#000" text-anchor="middle" font-size="12" >11:00</text>
<line x1="639.5" y1="758" x2="639.5" y2="763" stroke="#808080" stroke-width="1" />
<text transform="translate(639.5,777) scale(0.89,1)" fill="#000" text-anchor="middle" font-size="12" >12:00</text>
<line x1="683.5" y1="758" x2="683.5" y2="763" stroke="#808080" stroke-width="1" />
<text transform="translate(683.5,777) scale(0.89,1)" fill="#000" text-anchor="middle" font-size="12" >13:00</text>
<line x1="726.5" y1="758" x2="726.5" y2="763" stroke="#808080" stroke-width="1" />
<text transform="translate(726.5,777) scale(0.89,1)" fill="#000" text-anchor="middle" font-size="12" >14:00</text>
<line x1="770.5" y1="758" x2="770.5" y2="763" stroke="#808080" stroke-width="1" />
<text transform="translate(770.5,777) scale(0.89,1)" fill="#000" text-anchor="middle" font-size="12" >15:00</text>
<line x1="814.5" y1="758" x2="814.5" y2="763" stroke="#808080" stroke-width="1" />
<text transform="translate(814.5,777) scale(0.89,1)" fill="#000" text-anchor="middle" font-size="12" >16:00</text>
<line x1="858.5" y1="758" x2="858.5" y2="763" stroke="#808080" stroke-width="1" />
<text transform="translate(858.5,777) scale(0.89,1)" fill="#000" text-anchor="middle" font-size="12" >17:00</text>
<line x1="902.5" y1="758" x2="902.5" y2="763" stroke="#808080" stroke-width="1" />
<text transform="translate(902.5,777) scale(0.89,1)" fill="#000" text-anchor="middle" font-size="12" >18:00</text>
<line x1="945.5" y1="758" x2="945.5" y2="763" stroke="#808080" stroke-width="1" />
<text transform="translate(945.5,777) scale(0.89,1)" fill="#000" text-anchor="middle" font-size="12" >19:00</text>
<line x1="989.5" y1="758" x2="989.5" y2="763" stroke="#808080" stroke-width="1" />
<text transform="translate(989.5,777) scale(0.89,1)" fill="#000" text-anchor="middle" font-size="12" >20:00</text>
<line x1="1033.5" y1="758" x2="1033.5" y2="763" stroke="#808080" stroke-width="1" />
<text transform="translate(1033.5,777) scale(0.89,1)" fill="#000" text-anchor="middle" font-size="12" >21:00</text>
<line x1="1076.5" y1="758" x2="1076.5" y2="763" stroke="#808080" stroke-width="1" />
<text transform="translate(1076.5,777) scale(0.89,1)" fill="#000" text-anchor="middle" font-size="12" >22:00</text>
<line x1="1120.5" y1="758" x2="1120.5" y2="763" stroke="#808080" stroke-width="1" />
<text transform="translate(1120.5,777) scale(0.89,1)" fill="#000" text-anchor="middle" font-size="12" >23:00</text>
<line x1="1164.5" y1="758" x2="1164.5" y2="763" stroke="#808080" stroke-width="1" />
<text transform="translate(1164.5,777) scale(0.89,1)" fill="#000" text-anchor="middle" font-size="12" >24:00</text>
<rect x="375" y="754" width="2" height="13" fill="#FFFF00" />
<rect x="1047" y="754" width="2" height="13" fill="#FFFF00" />
<rect x="660" y="754" width="2" height="13" fill="#808080" />
<rect x="1128" y="754" width="2" height="13" fill="#808080" />
<text transform="translate(369,788) scale(0.89,1)" fill="#000" text-anchor="end" font-size="12" >05:59</text>
<text transform="translate(668,788) scale(0.89,1)" fill="#000" text-anchor="start" font-size="12" >12:29</text>
<text transform="translate(1042,788) scale(0.89,1)" fill="#000" text-anchor="end" font-size="12" >21:20</text>
<text transform="translate(1136,788) scale(0.89,1)" fill="#000" text-anchor="start" font-size="12" >23:12</text>
<text transform="translate(35,788) scale(0.89,1)" fill="#000" text-anchor="end" font-size="12" >15:21</text>
<g fill="#FFFFA0"><rect x="375" y="777" width="2" height="2"/><rect x="375" y="789" width="2" height="2"/><rect x="369" y="783" width="2" height="2"/><rect x="381" y="783" width="2" height="2"/><rect x="370" y="778" width="2" height="2"/><rect x="380" y="778" width="2" height="2"/><rect x="370" y="788" width="2" height="2"/><rect x="380" y="788" width="2" height="2"/></g>
<circle cx="376" cy="784" r="5" fill="none" stroke="#FFFFC8" stroke-width="1"/>
<circle cx="376" cy="784" r="3.2" fill="#FFFF00"/>
<g fill="#FFFF00" shape-rendering="crispEdges"><rect x="43" y="781" width="3" height="1"/><rect x="41" y="782" width="7" height="2"/><rect x="40" y="784" width="9" height="3"/></g>
<rect x="1045.5" y="781.5" width="5" height="5" fill="none" stroke="#FFFF60" stroke-width="1"/>
<g shape-rendering="crispEdges" fill="#2030A0"><rect x="656" y="778" width="1" height="1"/><rect x="661" y="778" width="1" height="1"/><rect x="656" y="783" width="1" height="1"/></g>
<path d="M663.5 780 L667 786.5 L665 786.5 L665 789 L662 789 L662 786.5 L660 786.5 Z" fill="#FFFF00"/>
<path d="M663.5 780 L660 786.5" stroke="#000" stroke-width="1"/>
<path d="M1126 778 L1129 778 L1129 780.5 L1131 780.5 L1127.5 787 L1124 780.5 L1126 780.5 Z" fill="#FFFF00"/>
<path d="M1131 780.5 L1127.5 787" stroke="#000" stroke-width="1"/>
<g shape-rendering="crispEdges" fill="#2030A0"><rect x="1129" y="785" width="2" height="1"/><rect x="1134" y="785" width="1" height="1"/></g>
<rect x="1" y="792" width="1278" height="72" fill="#CDF9F7" />
<rect x="1279" y="792" width="1" height="72" fill="#808080" />
<rect x="88" y="792" width="1" height="72" fill="#808080" />
<rect x="205" y="792" width="1" height="72" fill="#808080" />
<rect x="323" y="792" width="1" height="72" fill="#808080" />
<rect x="441" y="792" width="1" height="72" fill="#808080" />
<rect x="559" y="792" width="1" height="72" fill="#808080" />
<rect x="677" y="792" width="1" height="72" fill="#808080" />
<rect x="795" y="792" width="1" height="72" fill="#808080" />
<rect x="913" y="792" width="1" height="72" fill="#808080" />
<text x="9" y="810" fill="#000" text-anchor="start" font-size="12" font-weight="bold" >Sensor</text>
<text x="9" y="826" fill="#000" text-anchor="start" font-size="12" font-weight="bold" >MinWert</text>
<text x="9" y="842" fill="#000" text-anchor="start" font-size="12" font-weight="bold" >MaxWert</text>
<text x="9" y="858" fill="#000" text-anchor="start" font-size="12" font-weight="bold" >Durchschnitt</text>
<text x="95" y="810" fill="#000" text-anchor="start" font-size="12" font-weight="bold" >Temp. 2m</text>
<text x="198" y="810" fill="#000" text-anchor="end" font-size="12" font-weight="bold" >°C</text>
<text transform="translate(101,826) scale(0.89,1)" fill="#000" text-anchor="start" font-size="12" >06:45</text>
<text transform="translate(198,826) scale(0.89,1)" fill="#000" text-anchor="end" font-size="12" >11.6</text>
<text transform="translate(101,842) scale(0.89,1)" fill="#000" text-anchor="start" font-size="12" >17:03</text>
<text transform="translate(198,842) scale(0.89,1)" fill="#000" text-anchor="end" font-size="12" >20.1</text>
<text transform="translate(198,858) scale(0.89,1)" fill="#000" text-anchor="end" font-size="12" >14.96</text>
<text x="212" y="810" fill="#000" text-anchor="start" font-size="12" font-weight="bold" >Feuchte A.</text>
<text x="316" y="810" fill="#000" text-anchor="end" font-size="12" font-weight="bold" >%</text>
<text transform="translate(218,826) scale(0.89,1)" fill="#000" text-anchor="start" font-size="12" >17:03</text>
<text transform="translate(316,826) scale(0.89,1)" fill="#000" text-anchor="end" font-size="12" >65</text>
<text transform="translate(218,842) scale(0.89,1)" fill="#000" text-anchor="start" font-size="12" >01:00</text>
<text transform="translate(316,842) scale(0.89,1)" fill="#000" text-anchor="end" font-size="12" >93</text>
<text transform="translate(316,858) scale(0.89,1)" fill="#000" text-anchor="end" font-size="12" >83</text>
<text x="330" y="810" fill="#000" text-anchor="start" font-size="12" font-weight="bold" >Luftdruck</text>
<text x="434" y="810" fill="#000" text-anchor="end" font-size="12" font-weight="bold" >hPa</text>
<text transform="translate(336,826) scale(0.89,1)" fill="#000" text-anchor="start" font-size="12" >04:48</text>
<text transform="translate(434,826) scale(0.89,1)" fill="#000" text-anchor="end" font-size="12" >1016.8</text>
<text transform="translate(336,842) scale(0.89,1)" fill="#000" text-anchor="start" font-size="12" >23:36</text>
<text transform="translate(434,842) scale(0.89,1)" fill="#000" text-anchor="end" font-size="12" >1018.9</text>
<text transform="translate(330,858) scale(0.89,1)" fill="#000" text-anchor="start" font-size="12" >^0.7hPa/h</text>
<text transform="translate(434,858) scale(0.89,1)" fill="#000" text-anchor="end" font-size="12" >1017.8</text>
<text x="448" y="810" fill="#000" text-anchor="start" font-size="12" font-weight="bold" >Wind</text>
<text x="552" y="810" fill="#000" text-anchor="end" font-size="12" font-weight="bold" >km/h</text>
<text transform="translate(448,826) scale(0.89,1)" fill="#000" text-anchor="start" font-size="12" >Ø 10 min.</text>
<text transform="translate(552,826) scale(0.89,1)" fill="#000" text-anchor="end" font-size="12" >2.5</text>
<text transform="translate(454,842) scale(0.89,1)" fill="#000" text-anchor="start" font-size="12" >15:51</text>
<text transform="translate(552,842) scale(0.89,1)" fill="#000" text-anchor="end" font-size="12" >SW 18.5</text>
<text transform="translate(454,858) scale(0.89,1)" fill="#000" text-anchor="start" font-size="12" >285.2 km</text>
<text transform="translate(552,858) scale(0.89,1)" fill="#000" text-anchor="end" font-size="12" >6.3</text>
<text x="566" y="810" fill="#000" text-anchor="start" font-size="12" font-weight="bold" >Windböen</text>
<text x="670" y="810" fill="#000" text-anchor="end" font-size="12" font-weight="bold" >km/h</text>
<text transform="translate(566,826) scale(0.89,1)" fill="#000" text-anchor="start" font-size="12" >Ø 10 min.</text>
<text transform="translate(670,826) scale(0.89,1)" fill="#000" text-anchor="end" font-size="12" >4.8</text>
<text transform="translate(572,842) scale(0.89,1)" fill="#000" text-anchor="start" font-size="12" >15:42</text>
<text transform="translate(670,842) scale(0.89,1)" fill="#000" text-anchor="end" font-size="12" >S-SW 30.6</text>
<text transform="translate(572,858) scale(0.89,1)" fill="#000" text-anchor="start" font-size="12" >285.2 km</text>
<text transform="translate(670,858) scale(0.89,1)" fill="#000" text-anchor="end" font-size="12" >11.9</text>
<text x="684" y="810" fill="#000" text-anchor="start" font-size="12" font-weight="bold" >Regen</text>
<text x="788" y="810" fill="#000" text-anchor="end" font-size="12" font-weight="bold" >l/m²</text>
<text transform="translate(690,842) scale(0.89,1)" fill="#000" text-anchor="start" font-size="12" >13:33</text>
<text transform="translate(788,842) scale(0.89,1)" fill="#000" text-anchor="end" font-size="12" >0.4</text>
<text transform="translate(684,858) scale(0.89,1)" fill="#000" text-anchor="start" font-size="12" >Gesamt:</text>
<text transform="translate(788,858) scale(0.89,1)" fill="#000" text-anchor="end" font-size="12" >0.8</text>
<text x="802" y="810" fill="#000" text-anchor="start" font-size="12" font-weight="bold" >Temp +5 cm</text>
<text x="906" y="810" fill="#000" text-anchor="end" font-size="12" font-weight="bold" >°C</text>
<text transform="translate(808,826) scale(0.89,1)" fill="#000" text-anchor="start" font-size="12" >23:54</text>
<text transform="translate(906,826) scale(0.89,1)" fill="#000" text-anchor="end" font-size="12" >12.8</text>
<text transform="translate(808,842) scale(0.89,1)" fill="#000" text-anchor="start" font-size="12" >16:21</text>
<text transform="translate(906,842) scale(0.89,1)" fill="#000" text-anchor="end" font-size="12" >22.2</text>
<text transform="translate(906,858) scale(0.89,1)" fill="#000" text-anchor="end" font-size="12" >15.89</text>
<text x="921" y="810" fill="#000" text-anchor="start" font-size="12" font-weight="bold" >PMV+1:11</text>
<text transform="translate(920,826) scale(0.89,1)" fill="#000" text-anchor="start" font-size="12" >WC 11.8 °C</text>
<text transform="translate(920,842) scale(0.89,1)" fill="#000" text-anchor="start" font-size="12" >TP 9.2 °C</text>
<text transform="translate(920,858) scale(0.89,1)" fill="#000" text-anchor="start" font-size="12" >1.0hPa/3h</text>
</svg></body></html>
